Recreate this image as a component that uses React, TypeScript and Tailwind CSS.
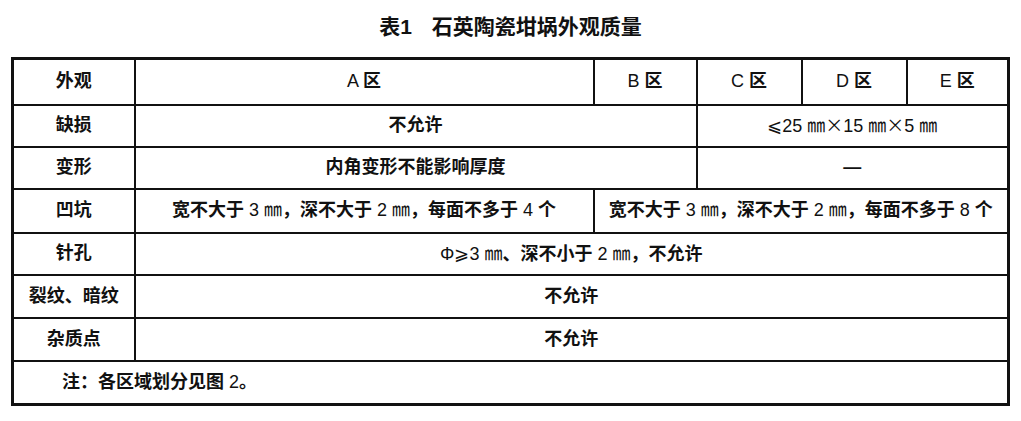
const font = {
  fontFamily: '"Liberation Sans Narrow", "Liberation Sans", "Noto Sans CJK SC", sans-serif',
}

const cell = 'border-2 border-[#111] text-center align-middle px-1'
const cjk = 'font-["Noto_Sans_CJK_SC",sans-serif]'

// 拉丁字母、数字用常规字重
function L({ children }: { children: React.ReactNode }) {
  return <span className="font-normal">{children}</span>
}

export default function App() {
  return (
    <div className="w-[1021px] h-[421px] bg-white text-[#111]" style={font}>
      {/* 标题 */}
      <div className="pt-[13px] h-[57px] text-center text-[21px] leading-[28px] font-bold">
        表1<span className="inline-block w-[20px]" />石英陶瓷坩埚外观质量
      </div>

      <div className="pl-[11px]">
        <table className="w-[996px] table-fixed border-collapse border-[3px] border-[#111] text-[18px] font-semibold">
          <colgroup>
            <col className="w-[122px]" />
            <col className="w-[459px]" />
            <col className="w-[103px]" />
            <col className="w-[105px]" />
            <col className="w-[105px]" />
            <col className="w-[102px]" />
          </colgroup>
          <tbody>
            <tr className="h-[46px]">
              <td className={cell}>外观</td>
              <td className={cell}><L>A </L>区</td>
              <td className={cell}><L>B </L>区</td>
              <td className={cell}><L>C </L>区</td>
              <td className={cell}><L>D </L>区</td>
              <td className={cell}><L>E </L>区</td>
            </tr>
            <tr className="h-[42px]">
              <td className={cell}>缺损</td>
              <td className={cell} colSpan={2}>不允许</td>
              <td className={cell} colSpan={3}>
                <L>
                  <span className={cjk}>⩽</span>25 ㎜<span className={cjk}>×</span>15 ㎜<span className={cjk}>×</span>5 ㎜
                </L>
              </td>
            </tr>
            <tr className="h-[42px]">
              <td className={cell}>变形</td>
              <td className={cell} colSpan={2}>内角变形不能影响厚度</td>
              <td className={cell} colSpan={3}>—</td>
            </tr>
            <tr className="h-[44px]">
              <td className={cell}>凹坑</td>
              <td className={cell}>
                宽不大于<L> 3 ㎜</L>，深不大于<L> 2 ㎜</L>，每面不多于<L> 4 </L>个
              </td>
              <td className={cell} colSpan={4}>
                宽不大于<L> 3 ㎜</L>，深不大于<L> 2 ㎜</L>，每面不多于<L> 8 </L>个
              </td>
            </tr>
            <tr className="h-[42px]">
              <td className={cell}>针孔</td>
              <td className={cell} colSpan={5}>
                <L>Φ<span className={cjk}>⩾</span>3 ㎜</L>、深不小于<L> 2 ㎜</L>，不允许
              </td>
            </tr>
            <tr className="h-[43px]">
              <td className={cell}>裂纹、暗纹</td>
              <td className={cell} colSpan={5}>不允许</td>
            </tr>
            <tr className="h-[43px]">
              <td className={cell}>杂质点</td>
              <td className={cell} colSpan={5}>不允许</td>
            </tr>
            <tr className="h-[44px]">
              <td className="border-2 border-[#111] align-middle pl-[48px]" colSpan={6}>
                注：各区域划分见图<L> 2</L>。
              </td>
            </tr>
          </tbody>
        </table>
      </div>
    </div>
  )
}
